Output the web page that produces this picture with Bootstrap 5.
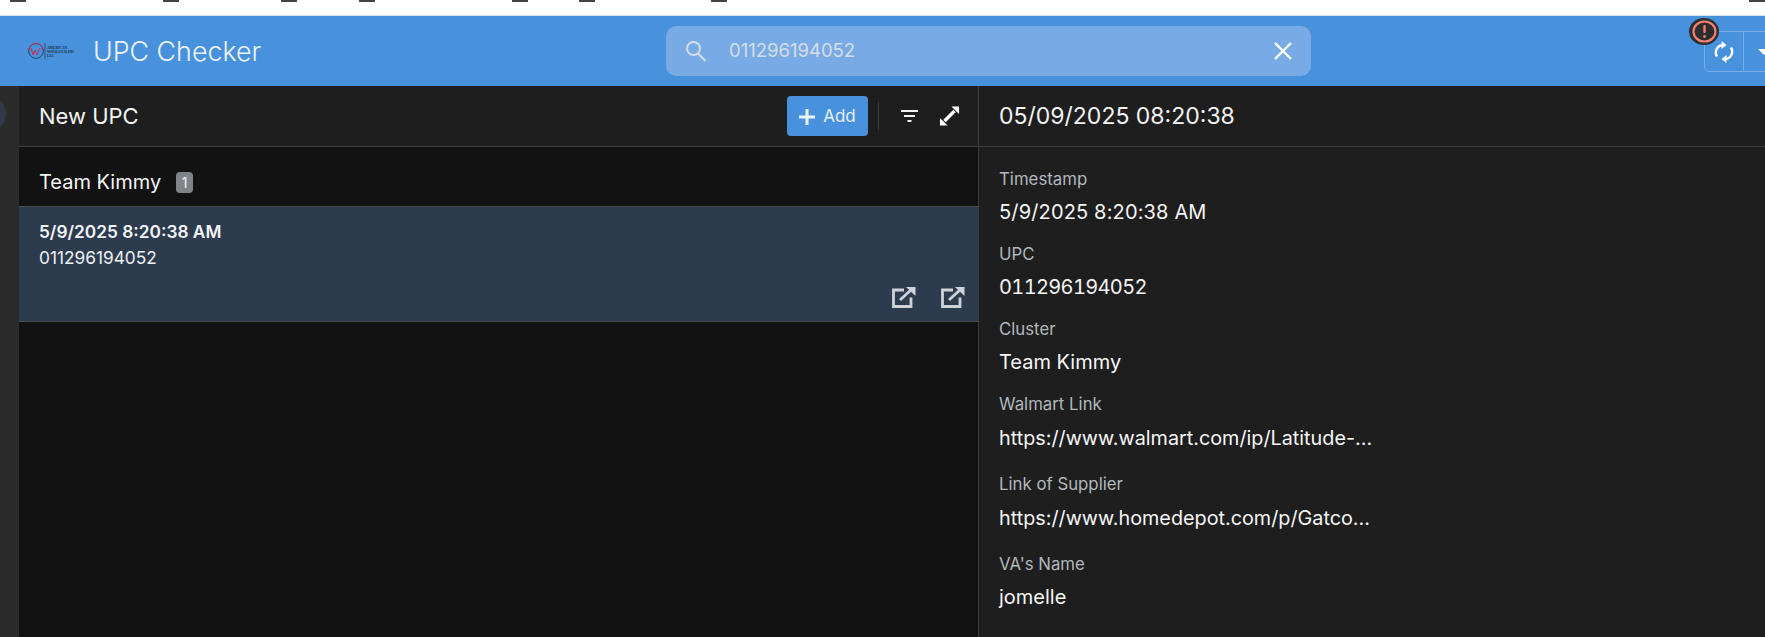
<!DOCTYPE html>
<html lang="en">
<head>
<meta charset="utf-8">
<title>UPC Checker</title>
<link href="https://cdn.jsdelivr.net/npm/bootstrap@5.3.0/dist/css/bootstrap.min.css" rel="stylesheet">
<style>
html,body{height:100%;overflow:hidden}
body{font-family:"Inter","Liberation Sans",sans-serif;background:#121212;color:#f4f4f4}
.shell{height:637px}
.topstrip{height:16px;background:#fff;border-bottom:1px solid #d5dfea;flex:none}
.tickmark{width:16px;height:2px;background:#444;flex:none}
.tickmark:nth-child(1){margin-left:10px}
.tickmark:nth-child(2){margin-left:137px}
.tickmark:nth-child(3){margin-left:102px}
.tickmark:nth-child(4){margin-left:62px}
.tickmark:nth-child(5){margin-left:137px}
.tickmark:nth-child(6){margin-left:51px}
.tickmark:nth-child(7){margin-left:116px}
.tickmark:nth-child(8){margin-left:1022px}
.appbar{height:70px;background:#4891dd;flex:none;position:relative}
.brandbox{width:93px;padding-left:28px;line-height:0}
.logotext{font-family:"Liberation Serif",serif;font-weight:700;fill:#1d2a3a;font-size:3.600px}
.apptitle{font-size:26.800px;font-weight:300;color:#eef4fb;line-height:1;width:573px}
.searchbox{width:645px;height:50px;background:#78abe5;border-radius:10px;padding:0 19px 0 19px;margin-top:-1px}
.searchval{font-size:18.500px;color:#d6dde6;margin-left:22px;padding-top:1px}
.syncgroup{position:absolute;left:1704px;top:15px;width:70px;height:41px;border:1px solid #79ace6;border-radius:5px 0 0 5px}
.syncbtn{width:39px;border-right:1px solid #79ace6}
.caretdown{width:0;height:0;border-left:6px solid transparent;border-right:6px solid transparent;border-top:6px solid #fff;margin-left:14px}
.alertdot{position:absolute;left:1689px;top:2px;width:30px;height:27px;border-radius:50%;background:#2d2d2d}
.rail{width:19px;background:#2b2b2b;flex:none;overflow:hidden;position:relative}
.railcircle{position:absolute;left:-30px;top:9px;width:36px;height:37px;border-radius:50%;background:#2e3a48}
.leftpane{width:960px;flex:none;border-right:1px solid #3d3d3d}
.panehead{height:61px;background:#1e1e1e;border-bottom:1px solid #3d3d3d;flex:none;padding:0 18px 0 20px}
.panetitle{font-size:22px;line-height:1}
.datehead{font-size:23px}
.addbtn{background:#4891dd;color:#e8f0fa;height:40px;width:81px;border-radius:4px;font-size:17px;border:0;margin-right:10px;padding-top:1px!important}
.vsep{width:1px;height:28px;background:#3d3d3d;margin-right:22px}
.filtericon{margin-right:21px}
.groupbar{height:59px;padding:23px 20px 0}
.groupname{font-size:20px;line-height:24px}
.countpill{background:#808489;color:#f2f2f2;font-size:14px;border-radius:4px;width:17px;height:21px;margin-left:15px;margin-top:2px}
.listrow{background:#2d3b4e;border-top:1px solid #4a4f55;border-bottom:1px solid #4a4f55;height:116px;padding:15px 20px 0;position:relative}
.rowtime{font-size:17.300px;font-weight:600;line-height:20px;color:#f4f6f8}
.rowupc{font-size:17.300px;line-height:20px;margin-top:6px;color:#eef1f4}
.rowicons{right:13px;bottom:13px;gap:25px}
.detailpane{background:#1e1e1e}
.detailbody{padding:20px 20px}
.fieldlabel{font-size:16.800px;color:#b1b8bd;line-height:24px}
.fieldval{font-size:20px;line-height:30px;color:#f6f6f6;margin-top:6px;margin-bottom:15px}
.fieldval.linky{margin-top:7px;margin-bottom:19px;white-space:nowrap;font-size:19.800px}
.fieldval.spaced{letter-spacing:.15px}
.fieldval.tabdigits{font-variant-numeric:tabular-nums;letter-spacing:-.65px}
.glyphwhite{stroke:#fff;fill:none}
</style>
</head>
<body>
<div class="shell d-flex flex-column">
  <div class="topstrip d-flex align-items-start">
    <span class="tickmark"></span><span class="tickmark"></span><span class="tickmark"></span><span class="tickmark"></span><span class="tickmark"></span><span class="tickmark"></span><span class="tickmark"></span><span class="tickmark"></span>
  </div>
  <header class="appbar d-flex align-items-center">
    <div class="brandbox">
      <svg width="46" height="18" viewBox="0 0 46 18" role="img" aria-label="logo">
        <circle cx="8" cy="9" r="7.400" fill="none" stroke="#26456f" stroke-width="1"/>
        <path d="M1 8.500A7 7 0 0 1 15 8" fill="none" stroke="#c8304a" stroke-width="1"/>
        <path d="M3 6l2 7 2-5 2 5 3-7" fill="none" stroke="#c8304a" stroke-width="1"/>
        <path d="M17 1V17" stroke="#33475f" stroke-width=".8"/>
        <text class="logotext" x="19" y="6.500">AMERICAN</text>
        <text class="logotext" x="19" y="10.500">WHOLESALERS</text>
        <text class="logotext" x="19" y="14.500">LLC</text>
      </svg>
    </div>
    <div class="apptitle">UPC Checker</div>
    <div class="searchbox d-flex align-items-center">
      <svg width="22" height="22" viewBox="0 0 22 22" fill="none" stroke="#d6dde6" stroke-width="2"><circle cx="8.500" cy="8.500" r="6.500"/><path d="M13 13.500L20.500 21"/></svg>
      <span class="searchval flex-grow-1">011296194052</span>
      <svg width="18" height="18" viewBox="0 0 18 18" class="glyphwhite" stroke-width="2.400"><path d="M1 1l16 16M17 1L1 17"/></svg>
    </div>
    <div class="syncgroup d-flex align-items-center">
      <div class="syncbtn h-100 d-flex align-items-center justify-content-center">
        <svg width="20" height="22" viewBox="0 0 20 22" fill="none" stroke="#fff" stroke-width="2.400"><path d="M3 15.500A7.500 7.500 0 0 1 9 4"/><path d="M7.500 0l5 4-5 4z" fill="#fff" stroke="none"/><path d="M17 6.500A7.500 7.500 0 0 1 11 18"/><path d="M12.500 22l-5-4 5-4z" fill="#fff" stroke="none"/></svg>
      </div>
      <span class="caretdown"></span>
    </div>
    <div class="alertdot d-flex align-items-center justify-content-center">
      <svg width="25" height="23" viewBox="0 0 25 23"><ellipse cx="12.500" cy="11.500" rx="11" ry="10" fill="none" stroke="#f47f72" stroke-width="2.200"/><rect x="11.300" y="5" width="2.400" height="8" rx="1" fill="#f47f72"/><circle cx="12.500" cy="16.500" r="1.400" fill="#f47f72"/></svg>
    </div>
  </header>
  <main class="d-flex flex-grow-1 overflow-hidden">
    <div class="rail"><div class="railcircle"></div></div>
    <section class="leftpane d-flex flex-column">
      <div class="panehead d-flex align-items-center">
        <div class="panetitle flex-grow-1">New UPC</div>
        <button class="addbtn btn p-0 d-flex align-items-center justify-content-center gap-2" type="button">
          <svg width="16" height="16" viewBox="0 0 16 16"><path d="M6.500 0h3v6.500H16v3H9.500V16h-3V9.500H0v-3h6.500z" fill="#eef4fb"/></svg>Add
        </button>
        <span class="vsep"></span>
        <svg class="filtericon" width="17" height="12" viewBox="0 0 17 12"><path d="M0 0h17v2H0zM3 5h11v2H3zM6.500 10h4v2h-4z" fill="#f4f4f4"/></svg>
        <svg width="21" height="22" viewBox="0 0 22 22" fill="#fff"><path d="M13 1h8v8zM1 13v8h8z"/><path d="M4.500 15L15 4.500l2.500 2.500L7 17.500z"/></svg>
      </div>
      <div class="groupbar d-flex align-items-start">
        <span class="groupname">Team Kimmy</span>
        <span class="countpill d-inline-flex align-items-center justify-content-center">1</span>
      </div>
      <div class="listrow">
        <div class="rowtime">5/9/2025 8:20:38 AM</div>
        <div class="rowupc">011296194052</div>
        <div class="rowicons position-absolute d-flex">
          <svg width="24" height="22" viewBox="0 0 24 22" fill="none" stroke="#cfd3d7" stroke-width="2.800"><path d="M12 4H1.500v16.500h17.500v-9"/><path d="M8 14L20 3"/><path d="M14 1h9.500v9z" fill="#cfd3d7" stroke="none"/></svg>
          <svg width="24" height="22" viewBox="0 0 24 22" fill="none" stroke="#cfd3d7" stroke-width="2.800"><path d="M12 4H1.500v16.500h17.500v-9"/><path d="M8 14L20 3"/><path d="M14 1h9.500v9z" fill="#cfd3d7" stroke="none"/></svg>
        </div>
      </div>
    </section>
    <section class="detailpane flex-grow-1 d-flex flex-column">
      <div class="panehead d-flex align-items-center">
        <div class="panetitle datehead">05/09/2025 08:20:38</div>
      </div>
      <div class="detailbody">
        <div class="fieldlabel">Timestamp</div>
        <div class="fieldval spaced">5/9/2025 8:20:38 AM</div>
        <div class="fieldlabel">UPC</div>
        <div class="fieldval tabdigits">011296194052</div>
        <div class="fieldlabel">Cluster</div>
        <div class="fieldval">Team Kimmy</div>
        <div class="fieldlabel">Walmart Link</div>
        <div class="fieldval linky">https://www.walmart.com/ip/Latitude-...</div>
        <div class="fieldlabel">Link of Supplier</div>
        <div class="fieldval linky">https://www.homedepot.com/p/Gatco...</div>
        <div class="fieldlabel">VA's Name</div>
        <div class="fieldval">jomelle</div>
      </div>
    </section>
  </main>
</div>
<script src="https://cdn.jsdelivr.net/npm/bootstrap@5.3.0/dist/js/bootstrap.bundle.min.js"></script>
</body>
</html>
